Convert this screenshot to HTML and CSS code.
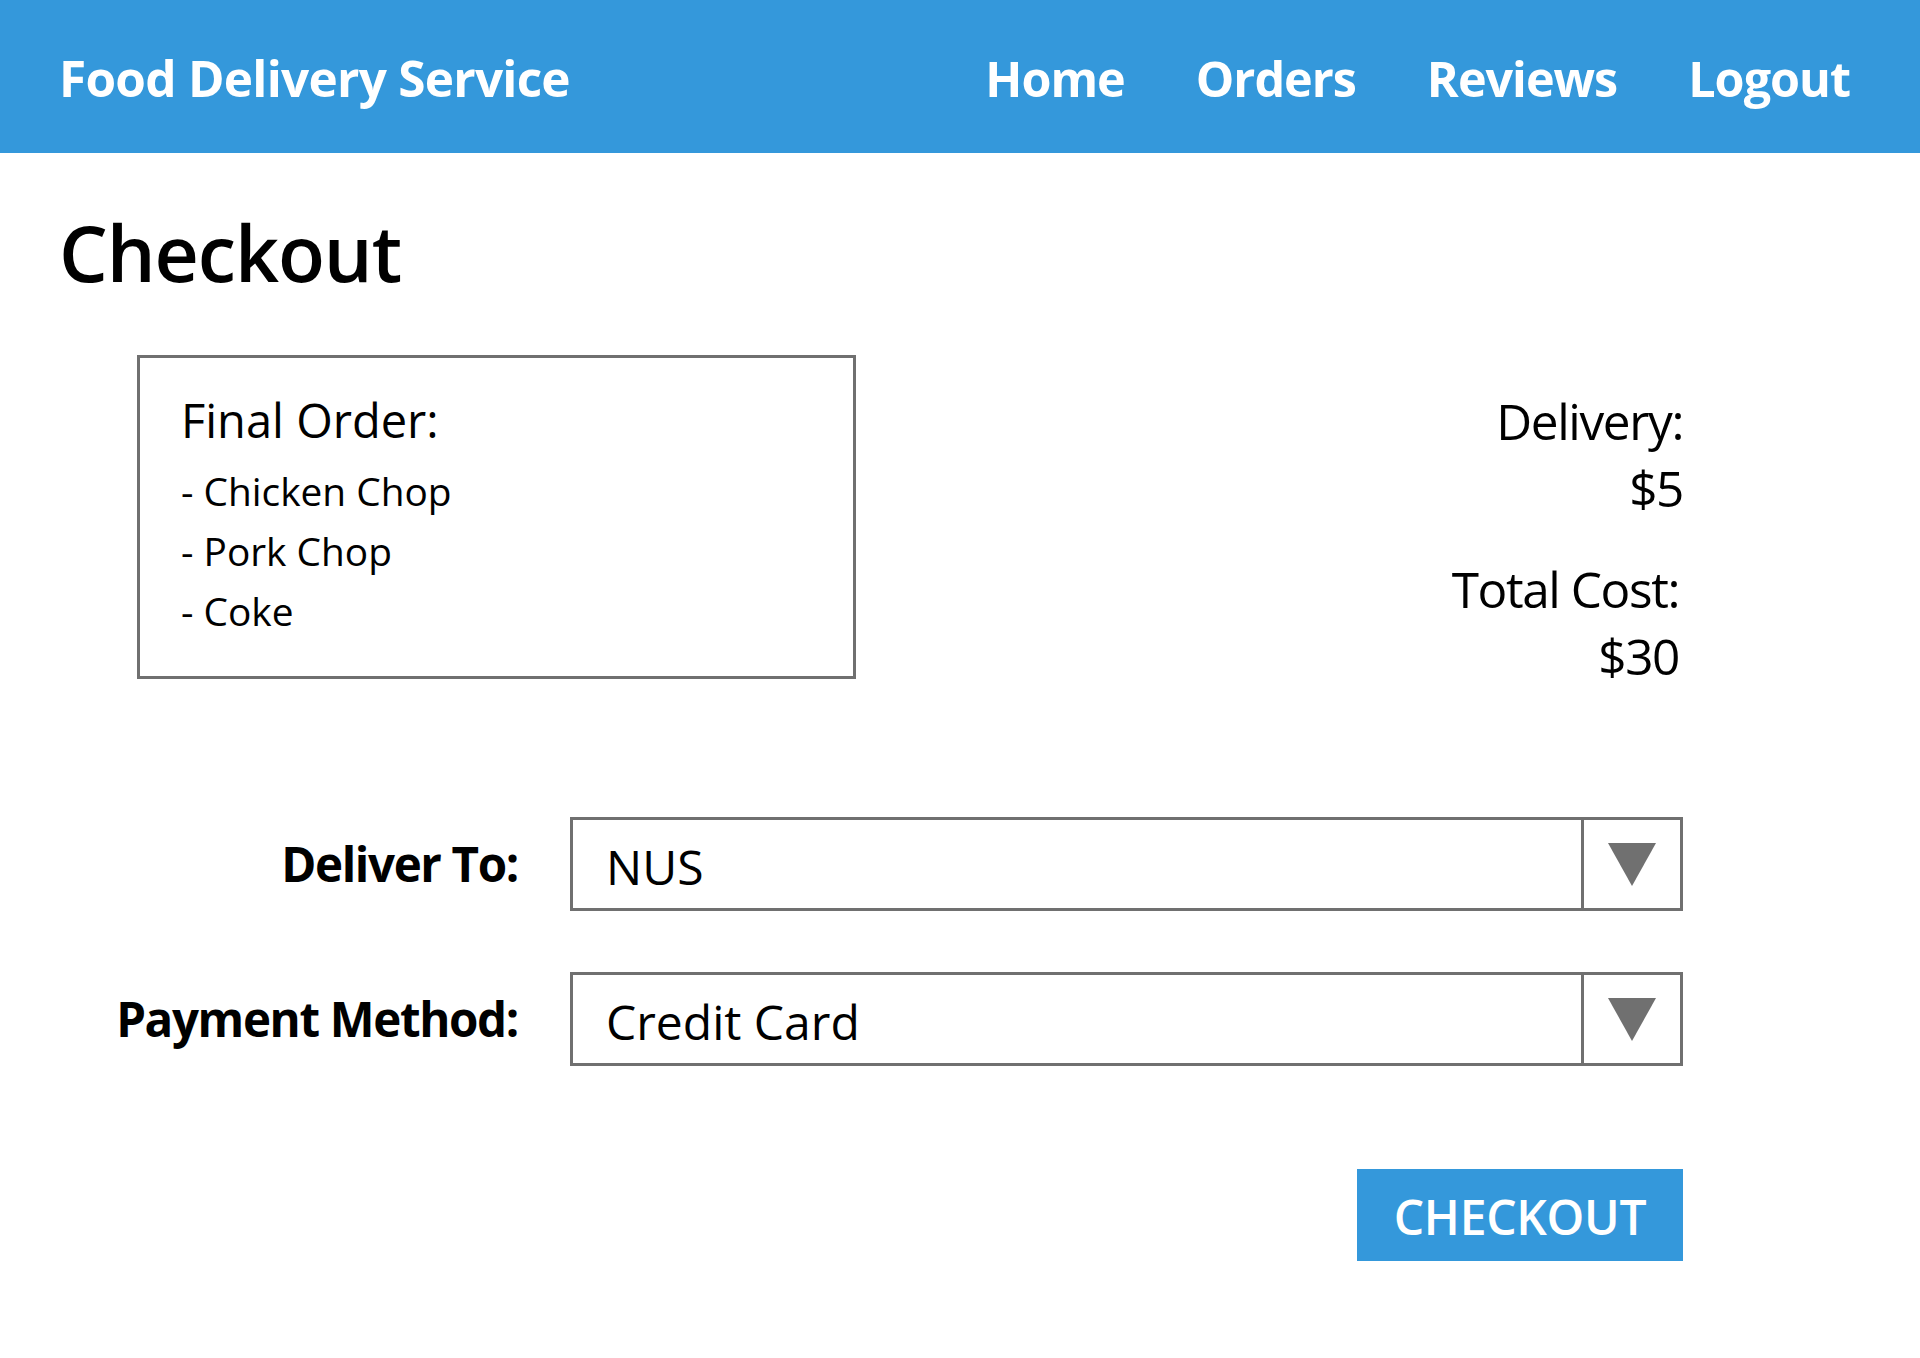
FILE: index.html
```html
<!DOCTYPE html>
<html lang="en">
<head>
<meta charset="utf-8">
<title>Checkout - Food Delivery Service</title>
<link rel="stylesheet" href="styles.css">
</head>
<body>
<header class="topbar">
  <div class="brand">Food Delivery Service</div>
  <nav class="nav">
    <a class="nav-link" href="#">Home</a>
    <a class="nav-link" href="#">Orders</a>
    <a class="nav-link" href="#">Reviews</a>
    <a class="nav-link" href="#">Logout</a>
  </nav>
</header>
<main class="page">
  <h1 class="title">Checkout</h1>
  <section class="summary">
    <div class="order-box">
      <div class="order-head">Final Order:</div>
      <ul class="order-list">
        <li>- Chicken Chop</li>
        <li>- Pork Chop</li>
        <li>- Coke</li>
      </ul>
    </div>
    <div class="costs">
      <div class="cost-group">
        <div class="cost-line">Delivery:</div>
        <div class="cost-line">$5</div>
      </div>
      <div class="cost-group total">
        <div class="cost-line">Total Cost:</div>
        <div class="cost-line">$30</div>
      </div>
    </div>
  </section>
  <section class="form">
    <div class="label">Deliver To:</div>
    <div class="select">
      <div class="select-value">NUS</div>
      <div class="select-btn"><span class="arrow"></span></div>
    </div>
    <div class="label">Payment Method:</div>
    <div class="select">
      <div class="select-value">Credit Card</div>
      <div class="select-btn"><span class="arrow"></span></div>
    </div>
  </section>
  <div class="actions">
    <button class="checkout-btn" type="button">CHECKOUT</button>
  </div>
</main>
</body>
</html>
```
FILE: styles.css
```css
* { box-sizing: border-box; }
body {
  margin: 0;
  font-family: "Open Sans", "Noto Sans", "Liberation Sans", sans-serif;
  color: #000;
  background: #fff;
}
.topbar {
  height: 153px;
  background: #3498db;
  display: flex;
  align-items: center;
  justify-content: space-between;
  padding: 0 70px 0 59px;
  color: #fff;
}
.brand {
  font-size: 49.5px;
  font-weight: 700;
  letter-spacing: -0.75px;
  line-height: 1;
  padding-top: 4px;
}
.nav {
  display: flex;
  gap: 71px;
  padding-top: 4px;
}
.nav-link {
  color: #fff;
  text-decoration: none;
  font-size: 48.5px;
  font-weight: 700;
  letter-spacing: -1px;
  line-height: 1;
}
.page {
  padding: 0 237px 0 59px;
}
.title {
  margin: 59px 0 0;
  font-size: 77px;
  font-weight: 600;
  letter-spacing: -1.1px;
  line-height: 81px;
}
.summary {
  display: flex;
  justify-content: space-between;
  align-items: flex-start;
  margin-top: 62px;
}
.order-box {
  margin-left: 78px;
  width: 719px;
  height: 324px;
  border: 3px solid #707070;
  padding: 32px 40px 0 41px;
}
.order-head {
  font-size: 47px;
  line-height: 60px;
}
.order-list {
  list-style: none;
  margin: 11px 0 0;
  padding: 0;
}
.order-list li {
  font-size: 38.8px;
  line-height: 60px;
}
.costs {
  margin-top: 33px;
  text-align: right;
  display: flex;
  flex-direction: column;
  gap: 34px;
}
.cost-line {
  font-size: 49.5px;
  letter-spacing: -1.4px;
  line-height: 67px;
}
.cost-group.total { padding-right: 4px; }
.form {
  margin-top: 127px;
  display: grid;
  grid-template-columns: 459px 1fr;
  column-gap: 52px;
  row-gap: 61px;
  align-items: center;
}
.label {
  text-align: right;
  font-size: 47.5px;
  font-weight: 700;
  letter-spacing: -1.35px;
  line-height: 1;
}
.select {
  height: 94px;
  border: 3px solid #707070;
  display: flex;
}
.select-value {
  flex: 1;
  display: flex;
  align-items: center;
  padding: 4px 0 0 33px;
  font-size: 48px;
}
.select-btn {
  width: 99px;
  border-left: 3px solid #707070;
  display: flex;
  align-items: center;
  justify-content: center;
}
.arrow {
  width: 0;
  height: 0;
  border-left: 24px solid transparent;
  border-right: 24px solid transparent;
  border-top: 43px solid #707070;
}
.actions {
  display: flex;
  justify-content: flex-end;
  margin-top: 103px;
}
.checkout-btn {
  width: 326px;
  height: 92px;
  border: 0;
  background: #3498db;
  color: #fff;
  font-family: inherit;
  font-size: 48px;
  font-weight: 600;
  letter-spacing: -0.3px;
  padding: 4px 0 0;
  line-height: 1;
}
```
